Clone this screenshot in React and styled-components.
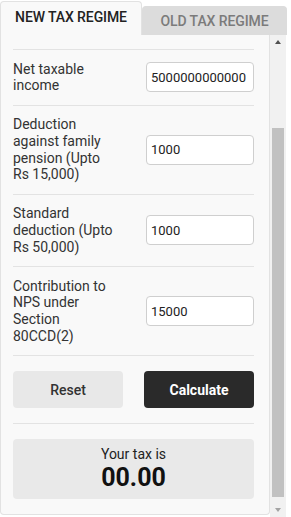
import React, { useLayoutEffect, useRef, useState } from 'react'
import styled, { createGlobalStyle } from 'styled-components'

const Global = createGlobalStyle`
body{
    margin:0;
    background:#fff;
    font-family: Roboto, "Liberation Sans", sans-serif;
}
`

const TRACK = 454

function App() {
    const [tab, setTab] = useState('new')
    const [thumb, setThumb] = useState({ top: 0, size: TRACK })
    const panelRef = useRef(null)
    const netRef = useRef(null)

    const measure = () => {
        const el = panelRef.current
        if (!el) return
        const size = Math.max(20, el.clientHeight / el.scrollHeight * TRACK)
        const room = el.scrollHeight - el.clientHeight
        const top = room > 0 ? el.scrollTop / room * (TRACK - size) : 0
        setThumb({ top, size })
    }

    useLayoutEffect(() => {
        // the reference shows the panel scrolled down to the income rows
        if (panelRef.current && netRef.current) {
            panelRef.current.scrollTop = netRef.current.offsetTop - 15
        }
        measure()
    }, [])

    return (
        <Wrap>
            <Global />
            <Tabs>
                <Tab active={tab === 'new'} onClick={() => setTab('new')}>NEW TAX REGIME</Tab>
                <Tab active={tab === 'old'} onClick={() => setTab('old')}>OLD TAX REGIME</Tab>
            </Tabs>
            <Body>
                <Panel ref={panelRef} onScroll={measure}>
                    <Card>
                        <Intro>
                            <h2>Income Tax Calculator</h2>
                            <p>Calculate your income tax under the new tax regime for FY 2023-24 (AY 2024-25).</p>
                        </Intro>
                        <Row ref={netRef}>
                            <Label>Net taxable income</Label>
                            <Input defaultValue="5000000000000" />
                        </Row>
                        <Row>
                            <Label>Deduction against family pension (Upto Rs 15,000)</Label>
                            <Input defaultValue="1000" />
                        </Row>
                        <Row>
                            <Label>Standard deduction (Upto Rs 50,000)</Label>
                            <Input defaultValue="1000" />
                        </Row>
                        <Row>
                            <Label>Contribution to NPS under Section 80CCD(2)</Label>
                            <Input defaultValue="15000" />
                        </Row>
                        <Buttons>
                            <Button>Reset</Button>
                            <Button primary>Calculate</Button>
                        </Buttons>
                        <Result>
                            <span>Your tax is</span>
                            <strong>00.00</strong>
                        </Result>
                    </Card>
                </Panel>
                <ScrollBar>
                    <Arrow><Triangle /></Arrow>
                    <Track>
                        <Thumb style={{ marginTop: thumb.top, height: thumb.size }} />
                    </Track>
                    <Arrow><Triangle down /></Arrow>
                </ScrollBar>
            </Body>
        </Wrap>
    )
}

export default App

const Wrap = styled.div`
width:287px;
padding-top:1px;
`

const Tabs = styled.div`
display:flex;
align-items:flex-end;
height:34px;
`

const Tab = styled.button`
box-sizing:border-box;
font-family: Roboto, "Liberation Sans", sans-serif;
font-size:14px;
font-weight:500;
letter-spacing:-0.1px;
cursor:pointer;
border:1px solid ${props => props.active ? '#e2e2e2' : '#dcdcdc'};
border-bottom:none;
border-radius:4px 4px 0 0;
padding:0;
${props => props.active ? `
width:142px;
height:34px;
background:#f9f9f9;
color:#222;
padding-bottom:3px;
` : `
flex:1;
height:29px;
background:#dcdcdc;
color:#7b7b7b;
`}
`

const Body = styled.div`
display:flex;
width:286px;
height:482px;
`

const Panel = styled.div`
flex:1;
overflow-y:scroll;
scrollbar-width:none;
padding-bottom:10px;
box-sizing:border-box;
position:relative;
&::-webkit-scrollbar{
    display:none;
}
`

const ScrollBar = styled.div`
width:16px;
flex-shrink:0;
display:flex;
flex-direction:column;
background:#f1f1f1;
`

const Arrow = styled.div`
height:14px;
display:flex;
align-items:center;
justify-content:center;
`

const Triangle = styled.div`
width:0;
height:0;
border-left:3.5px solid transparent;
border-right:3.5px solid transparent;
${props => props.down
        ? 'border-top:4px solid #a3a3a3;'
        : 'border-bottom:4px solid #505050;'}
`

const Track = styled.div`
flex:1;
padding:0 2px;
overflow:hidden;
`

const Thumb = styled.div`
background:#c1c1c1;
`

const Card = styled.div`
width:270px;
box-sizing:border-box;
background:#f9f9f9;
border:1px solid #e2e2e2;
border-top:none;
border-radius:0 0 4px 4px;
padding:16px 15px 15px 12px;
`

const Intro = styled.div`
padding:12px 0 24px;
border-bottom:1px solid #e3e3e3;
h2{
    margin:0 0 8px;
    font-size:16px;
    line-height:20px;
    font-weight:700;
    color:#222;
}
p{
    margin:0;
    font-size:13px;
    line-height:19px;
    color:#555;
}
`

const Row = styled.div`
display:flex;
align-items:center;
justify-content:space-between;
padding:10.5px 0;
border-bottom:1px solid #e3e3e3;
`

const Label = styled.div`
width:100px;
font-size:14px;
line-height:1.2;
color:#333;
`

const Input = styled.input`
width:108px;
height:30px;
box-sizing:border-box;
border:1px solid #cfcfcf;
border-radius:4px;
padding:0 4px;
font-family: Roboto, "Liberation Sans", sans-serif;
font-size:13px;
color:#222;
background:#fff;
outline:none;
`

const Buttons = styled.div`
display:flex;
justify-content:space-between;
padding:15px 0;
border-bottom:1px solid #e3e3e3;
`

const Button = styled.button`
width:110px;
height:37px;
border:none;
border-radius:4px;
cursor:pointer;
font-family: Roboto, "Liberation Sans", sans-serif;
font-size:14px;
font-weight:${props => props.primary ? 700 : 500};
background:${props => props.primary ? '#2a2a2a' : '#e8e8e8'};
color:${props => props.primary ? '#fff' : '#333'};
`

const Result = styled.div`
margin-top:15px;
height:60px;
box-sizing:border-box;
background:#e9e9e9;
border-radius:4px;
display:flex;
flex-direction:column;
align-items:center;
justify-content:center;
color:#222;
span{
    font-size:14px;
    line-height:17px;
}
strong{
    font-size:25px;
    line-height:30px;
    font-weight:700;
    color:#111;
}
`
